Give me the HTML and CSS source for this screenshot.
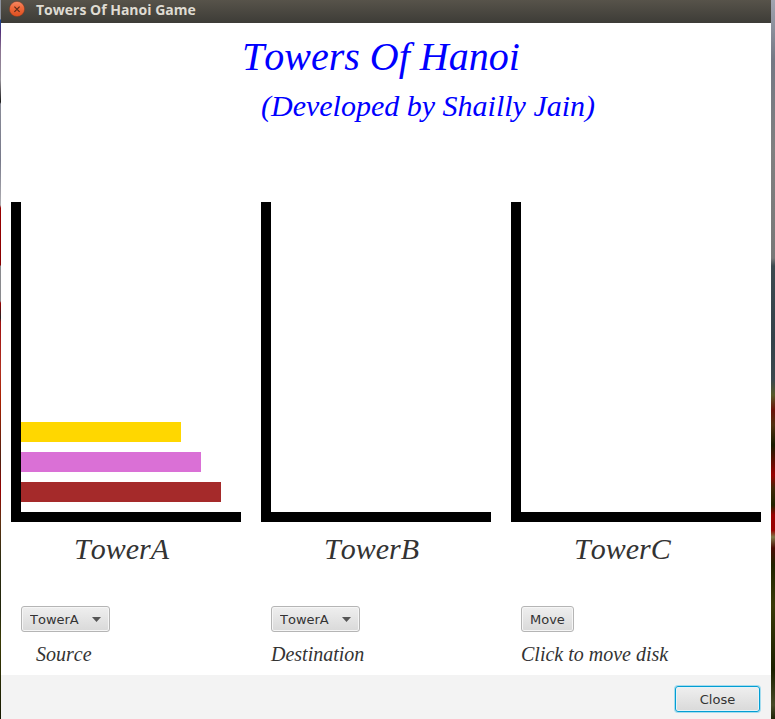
FILE: index.html
```html
<!DOCTYPE html>
<html lang="en">
<head>
<meta charset="utf-8">
<title>Towers Of Hanoi Game</title>
<link rel="stylesheet" href="styles.css">
</head>
<body>
<div class="desktop">
  <div class="edge edge-left"></div>
  <div class="window">
    <header class="titlebar">
      <button class="window-close" type="button" aria-label="Close window">
        <svg viewBox="0 0 16 16" width="16" height="16">
          <defs>
            <linearGradient id="orb" x1="0" y1="0" x2="0" y2="1">
              <stop offset="0" stop-color="#f58a66"/>
              <stop offset="0.4" stop-color="#f06a3c"/>
              <stop offset="1" stop-color="#dd4f20"/>
            </linearGradient>
          </defs>
          <circle cx="8" cy="8" r="7.6" fill="url(#orb)" stroke="#7c3a22" stroke-width="0.5"/>
          <path d="M5.4 5.6 L10.6 10.8 M10.6 5.6 L5.4 10.8" stroke="#5c2c1b" stroke-width="1.2"/>
        </svg>
      </button>
      <span class="titlebar-text">Towers Of Hanoi Game</span>
    </header>
    <main class="game">
      <h1 class="title">Towers Of Hanoi</h1>
      <p class="credit">(Developed by Shailly Jain)</p>
      <section class="board">
        <div class="peg">
          <div class="tower">
            <div class="disk disk-small"></div>
            <div class="disk disk-medium"></div>
            <div class="disk disk-large"></div>
          </div>
          <p class="peg-name">TowerA</p>
        </div>
        <div class="peg">
          <div class="tower"></div>
          <p class="peg-name">TowerB</p>
        </div>
        <div class="peg">
          <div class="tower"></div>
          <p class="peg-name">TowerC</p>
        </div>
      </section>
      <section class="controls">
        <div class="control">
          <select class="button picker" id="source">
            <option>TowerA</option><option>TowerB</option><option>TowerC</option>
          </select>
          <label class="caption caption-indent" for="source">Source</label>
        </div>
        <div class="control">
          <select class="button picker" id="destination">
            <option>TowerA</option><option>TowerB</option><option>TowerC</option>
          </select>
          <label class="caption" for="destination">Destination</label>
        </div>
        <div class="control">
          <button class="button" id="move" type="button">Move</button>
          <label class="caption" for="move">Click to move disk</label>
        </div>
      </section>
    </main>
    <footer class="footer">
      <button class="button close" type="button">Close</button>
    </footer>
  </div>
  <div class="edge edge-right"></div>
</div>
</body>
</html>
```
FILE: styles.css
```css
* {
  box-sizing: border-box;
  font-kerning: none;
}

body {
  margin: 0;
  background: #fff;
  color: #333;
  font-family: "DejaVu Sans", sans-serif;
}

h1,
p {
  margin: 0;
}

.desktop {
  display: grid;
  grid-template-columns: 1px 1fr 4px;
  min-height: 100vh;
}

.edge-left {
  background: linear-gradient(#8c929e 0, #8c929e 19px, #1a4a96 20px, #54307a 32px, #8a7390 50px, #98949c 80px, #1a1a1a 102px, #8a8c98 104px, #77798a 160px, #b0aeb2 205px, #900 208px, #800 265px, #8a8a8e 266px, #8a8a8e 301px, #900 303px, #222 318px, #a01010 322px, #b03020 370px, #a82000 400px, #502010 460px, #900 490px, #603010 520px, #2c2c10 560px, #20240a 610px, #3a3a04 640px, #141800 719px);
}

.edge-right {
  background: linear-gradient(#a0a4b0 0, #747884 60px, #808080 150px, #787878 258px, #3c4a50 266px, #34424a 340px, #3c484e 380px, #585828 395px, #6a1208 410px, #503010 425px, #181c00 445px, #900 475px, #402808 488px, #202400 505px, #900 515px, #900 530px, #807848 537px, #4a0c04 548px, #202400 565px, #3a3a08 605px, #1c2000 670px, #484a28 705px, #202408 719px);
}

.window {
  display: flex;
  flex-direction: column;
  min-width: 0;
}

.titlebar {
  display: flex;
  align-items: flex-start;
  gap: 11px;
  height: 23px;
  padding: 1px 8px;
  background: linear-gradient(#57534a, #3d3c37);
  color: #dfdbd2;
  font: bold 14px/18px "Open Sans", sans-serif;
}

.window-close {
  width: 16px;
  height: 16px;
  padding: 0;
  border: 0;
  background: none;
}

.window-close svg {
  display: block;
}

.game {
  flex: 1;
  padding: 11px 10px 0;
  background: #fff;
  font-family: "Liberation Serif", serif;
  font-style: italic;
}

.title {
  padding-left: 231px;
  color: #00f;
  font-size: 40px;
  font-weight: normal;
  line-height: 46px;
}

.credit {
  padding-left: 250px;
  color: #00f;
  font-size: 30px;
  line-height: 52px;
}

.board,
.controls {
  display: grid;
  grid-template-columns: repeat(3, 1fr);
}

.board {
  margin-top: 70px;
}

.tower {
  display: flex;
  flex-direction: column;
  justify-content: flex-end;
  gap: 10px;
  height: 320px;
  margin-right: 20px;
  padding-bottom: 10px;
  border: solid #000;
  border-width: 0 0 10px 10px;
}

.peg:last-child .tower {
  margin-right: 0;
}

.disk {
  height: 20px;
}

.disk-small {
  width: 160px;
  background: gold;
}

.disk-medium {
  width: 180px;
  background: orchid;
}

.disk-large {
  width: 200px;
  background: brown;
}

.peg-name {
  padding-left: 63px;
  font-size: 30px;
  line-height: 54px;
}

.controls {
  margin-top: 30px;
}

.control {
  display: flex;
  flex-direction: column;
  align-items: flex-start;
  gap: 10px;
  padding-left: 10px;
}

.button {
  height: 26px;
  padding: 0 8px;
  border: 1px solid #b5b5b5;
  border-radius: 3px;
  background: linear-gradient(#efefef, #d9d9d9);
  box-shadow: inset 0 0 0 1px #f6f6f6;
  color: #333;
  font: 13px "DejaVu Sans", sans-serif;
  font-kerning: none;
}

.picker {
  width: 89px;
  appearance: none;
  background: url("data:image/svg+xml,%3Csvg xmlns='http://www.w3.org/2000/svg' viewBox='0 0 9 5'%3E%3Cpath d='M0 0H9L4.5 5Z' fill='%23555'/%3E%3C/svg%3E") right 8px center / 9px 5px no-repeat, linear-gradient(#efefef, #d9d9d9);
}

.caption {
  font-size: 20px;
  line-height: 24px;
}

.caption-indent {
  padding-left: 15px;
}

.footer {
  display: flex;
  justify-content: flex-end;
  padding: 11px 11px 7px;
  background: #f3f3f3;
}

.close {
  width: 85px;
  border-color: #039ed3;
  box-shadow: 0 0 0 1px #a5dcee, inset 0 0 0 1px #e6f3f8;
}
```
